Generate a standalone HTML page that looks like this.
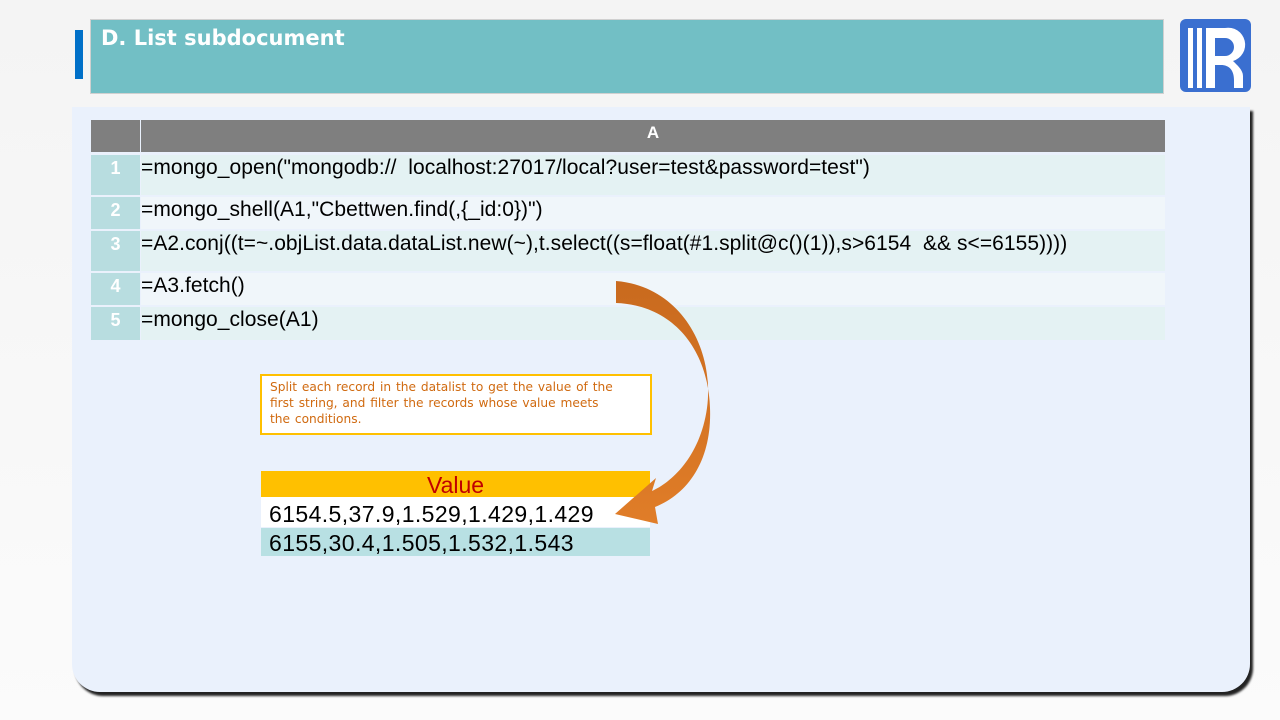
<!DOCTYPE html>
<html><head><meta charset="utf-8"><style>
body{margin:0;width:1280px;height:720px;background:linear-gradient(180deg,#f4f4f4,#fbfbfb);position:relative;overflow:hidden;font-family:"Liberation Sans",sans-serif}
.abs{position:absolute}
.title{left:90px;top:19px;width:1074px;height:75px;background:#72bfc5;border:1px solid #d0d0d0;box-sizing:border-box}
.title span{position:absolute;left:10px;top:6px;color:#fff;font-family:"DejaVu Sans",sans-serif;font-weight:bold;font-size:21px}
.bar{left:75px;top:30px;width:8px;height:49px;background:#0070c8}
.panel{left:72px;top:107px;width:1178px;height:585px;background:#eaf1fc;border-radius:0 0 28px 28px;box-shadow:3px 4px 2px #222}
.num{left:91px;width:49px;background:#b8dde0;color:#fff;font-weight:bold;font-size:18px;text-align:center}
.cell{left:141px;width:1024px;font-size:21px;letter-spacing:0.05px;color:#000;padding-left:0;box-sizing:border-box;white-space:pre}
.note{left:260px;top:374px;width:392px;height:61px;border:2px solid #ffc000;background:#fff;box-sizing:border-box;color:#d06a10;font-family:"DejaVu Sans",sans-serif;font-size:12.2px;line-height:16px;padding:3px 28px 3px 8px;word-spacing:1px}
.vt{left:261px;width:389px;font-size:23px;letter-spacing:0.4px;box-sizing:border-box;padding-left:8px}
</style></head><body>
<div class="abs bar"></div>
<div class="abs title"><span>D. List subdocument</span></div>
<svg class="abs" style="left:1179px;top:18px" width="73" height="75" viewBox="0 0 73 75"><rect x="1" y="1" width="71" height="73" rx="6" fill="#3a6fd0"/><rect x="9" y="10" width="5" height="60" fill="#fff"/><rect x="18" y="10" width="5" height="60" fill="#fff"/><path d="M27 10H46A17 17 0 0 1 54 43C58 47 64 52 64 58V70H55V62C55 52 50 47 42 47H36V70H27Z M36 20V38H46A9 9 0 0 0 46 20Z" fill="#fff" fill-rule="evenodd"/></svg>
<div class="abs panel"></div>
<div class="abs" style="left:91px;top:120px;width:49px;height:32px;background:#7f7f7f"></div>
<div class="abs" style="left:141px;top:120px;width:1024px;height:32px;background:#7f7f7f;color:#fff;font-weight:bold;font-size:17px;text-align:center;line-height:26px">A</div>
<div class="abs num" style="top:155px;height:40px;line-height:26px">1</div><div class="abs cell" style="top:155px;height:40px;background:#e4f2f3;line-height:26px">=mongo_open("mongodb://  localhost:27017/local?user=test&amp;password=test")</div>
<div class="abs num" style="top:197px;height:32px;line-height:26px">2</div><div class="abs cell" style="top:197px;height:32px;background:#f0f6fa;line-height:26px">=mongo_shell(A1,"Cbettwen.find(,{_id:0})")</div>
<div class="abs num" style="top:231px;height:40px;line-height:26px">3</div><div class="abs cell" style="top:231px;height:40px;background:#e4f2f3;line-height:26px">=A2.conj((t=~.objList.data.dataList.new(~),t.select((s=float(#1.split@c()(1)),s&gt;6154  &amp;&amp; s&lt;=6155))))</div>
<div class="abs num" style="top:273px;height:32px;line-height:26px">4</div><div class="abs cell" style="top:273px;height:32px;background:#f0f6fa;line-height:26px">=A3.fetch()</div>
<div class="abs num" style="top:307px;height:33px;line-height:26px">5</div><div class="abs cell" style="top:307px;height:33px;background:#e4f2f3;line-height:26px">=mongo_close(A1)</div>
<div class="abs note">Split each record in the datalist to get the value of the first string, and filter the records whose value meets the conditions.</div>
<div class="abs vt" style="top:471px;height:26px;background:#ffc000;color:#c00000;text-align:center;line-height:28px;padding:0;letter-spacing:0">Value</div>
<div class="abs vt" style="top:497px;height:30px;background:#fff;line-height:34px">6154.5,37.9,1.529,1.429,1.429</div>
<div class="abs vt" style="top:528px;height:28px;background:#b8e0e3;line-height:30px">6155,30.4,1.505,1.532,1.543</div>
<svg class="abs" style="left:600px;top:278px" width="120" height="255" viewBox="0 0 120 255"><defs><linearGradient id="g" x1="0" y1="0" x2="0" y2="1"><stop offset="0" stop-color="#c96a1e"/><stop offset="1" stop-color="#e07d28"/></linearGradient></defs><path d="M16 3C80 8 115 70 107 130C100 180 70 205 52 213L56 200L15 236L58 246L55 229C90 215 112 180 110 130C108 70 72 27 16 25Z" fill="url(#g)"/></svg>
</body></html>
